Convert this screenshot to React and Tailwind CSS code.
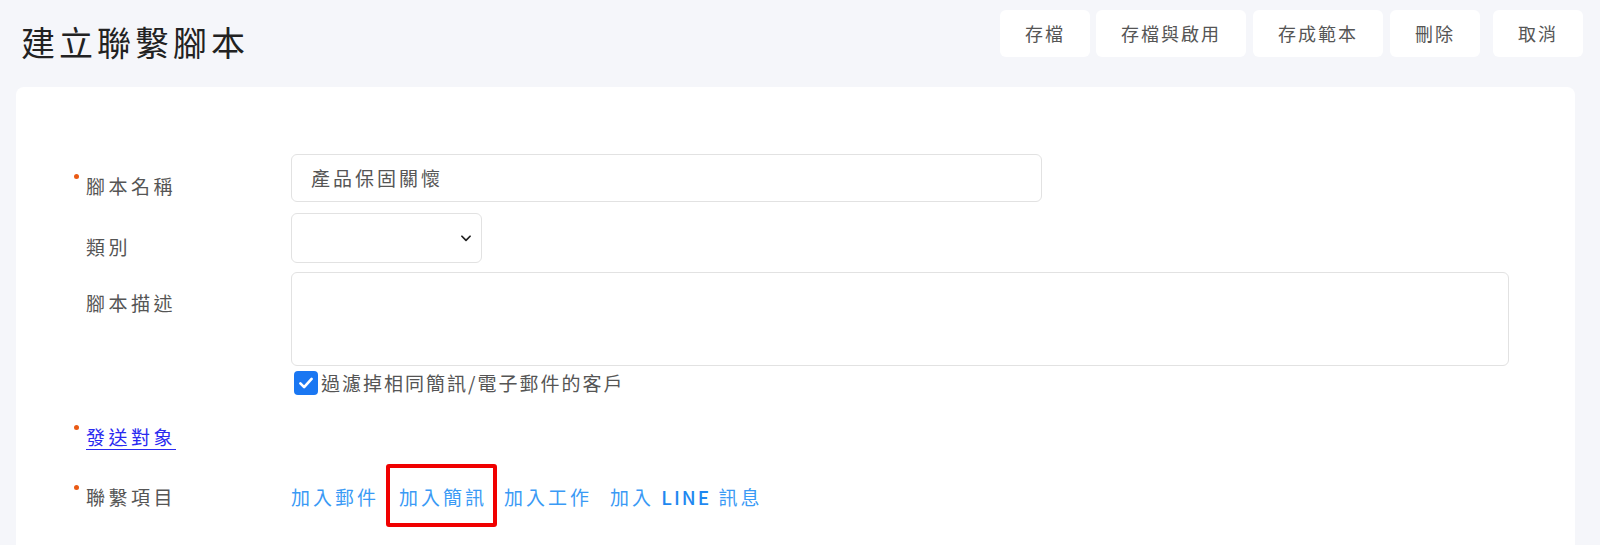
import React from "react";

const font = { fontFamily: '"Noto Sans CJK TC", "Noto Sans", sans-serif' };

function Dot() {
  return <span className="absolute left-[-12px] top-[0px] w-[5px] h-[5px] rounded-full bg-[#ea5a14]" />;
}

function Label({ children, required, pt }) {
  return (
    <div className={`w-[216px] shrink-0 pl-[11px] ${pt}`}>
      <span className="relative inline-block text-[19px] leading-[24px] tracking-[3.5px] text-[#555]">
        {required && <Dot />}
        {children}
      </span>
    </div>
  );
}

export default function App() {
  const btn = "h-[47px] bg-white rounded-md text-[18px] tracking-[2px] text-[#555] flex items-center justify-center";
  return (
    <div className="min-h-screen bg-[#f5f6fa] pl-4 pr-[25px] pb-10" style={font}>
      <div className="flex justify-between items-start h-[87px]">
        <h1 className="ml-[5px] mt-[22px] text-[34px] leading-[40px] tracking-[4px] text-[#222] font-normal">建立聯繫腳本</h1>
        <div className="flex mt-[10px] mr-[-8px]">
          <button className={`${btn} w-[90px]`}>存檔</button>
          <button className={`${btn} w-[150px] ml-[6px]`}>存檔與啟用</button>
          <button className={`${btn} w-[130px] ml-[7px]`}>存成範本</button>
          <button className={`${btn} w-[90px] ml-[7px]`}>刪除</button>
          <button className={`${btn} w-[90px] ml-[13px]`}>取消</button>
        </div>
      </div>
      <div className="bg-white rounded-lg pl-[59px] pt-[67px] pb-[60px]">
        <div className="flex">
          <Label required pt="pt-[20px]">腳本名稱</Label>
          <div className="w-[751px] h-[48px] border border-[#e2e2e2] rounded-md flex items-center pl-[19px] text-[19px] tracking-[3px] text-[#555]">
            產品保固關懷
          </div>
        </div>
        <div className="flex mt-[11px]">
          <Label pt="pt-[22px]">類別</Label>
          <div className="w-[191px] h-[50px] border border-[#e2e2e2] rounded-md flex items-center justify-end pr-[8px]">
            <svg width="14" height="14" viewBox="0 0 24 24" fill="none" stroke="#222" strokeWidth="3" strokeLinecap="round" strokeLinejoin="round">
              <path d="M5 9l7 7 7-7" />
            </svg>
          </div>
        </div>
        <div className="flex mt-[9px]">
          <Label pt="pt-[19px]">腳本描述</Label>
          <div className="flex flex-col">
            <div className="w-[1218px] h-[94px] border border-[#e2e2e2] rounded-md" />
            <div className="flex items-center mt-[5px] ml-[3px]">
              <span className="w-[24px] h-[24px] rounded-[4px] bg-[#1a77f2] flex items-center justify-center">
                <svg width="18" height="18" viewBox="0 0 24 24" fill="none" stroke="white" strokeWidth="3.5" strokeLinecap="round" strokeLinejoin="round">
                  <path d="M4.5 12.5l5 5L19.5 6.5" />
                </svg>
              </span>
              <span className="ml-[3px] text-[19px] leading-[24px] tracking-[2px] text-[#555]">過濾掉相同簡訊/電子郵件的客戶</span>
            </div>
          </div>
        </div>
        <div className="flex mt-[30px]">
          <div className="w-[216px] shrink-0 pl-[11px]">
            <span className="relative inline-block text-[19px] leading-[24px] tracking-[3.5px]">
              <Dot />
              <a href="#" className="text-[#2a2af0] underline underline-offset-[4px]">發送對象</a>
            </span>
          </div>
        </div>
        <div className="flex mt-[35px]">
          <Label required pt="pt-0">聯繫項目</Label>
          <div className="flex text-[19px] leading-[24px] tracking-[3px] text-[#3a9af5]">
            <a href="#">加入郵件</a>
            <a href="#" className="relative ml-[20px]">
              加入簡訊
              <span className="absolute left-[-13px] right-[-10px] top-[-21px] bottom-[-17px] border-[4px] border-[#f00000] rounded-[3px]" />
            </a>
            <a href="#" className="ml-[17px]">加入工作</a>
            <a href="#" className="ml-[18px]">加入 <span className="font-medium text-[#1f88f0] tracking-[2px]">LINE</span> 訊息</a>
          </div>
        </div>
      </div>
    </div>
  );
}
